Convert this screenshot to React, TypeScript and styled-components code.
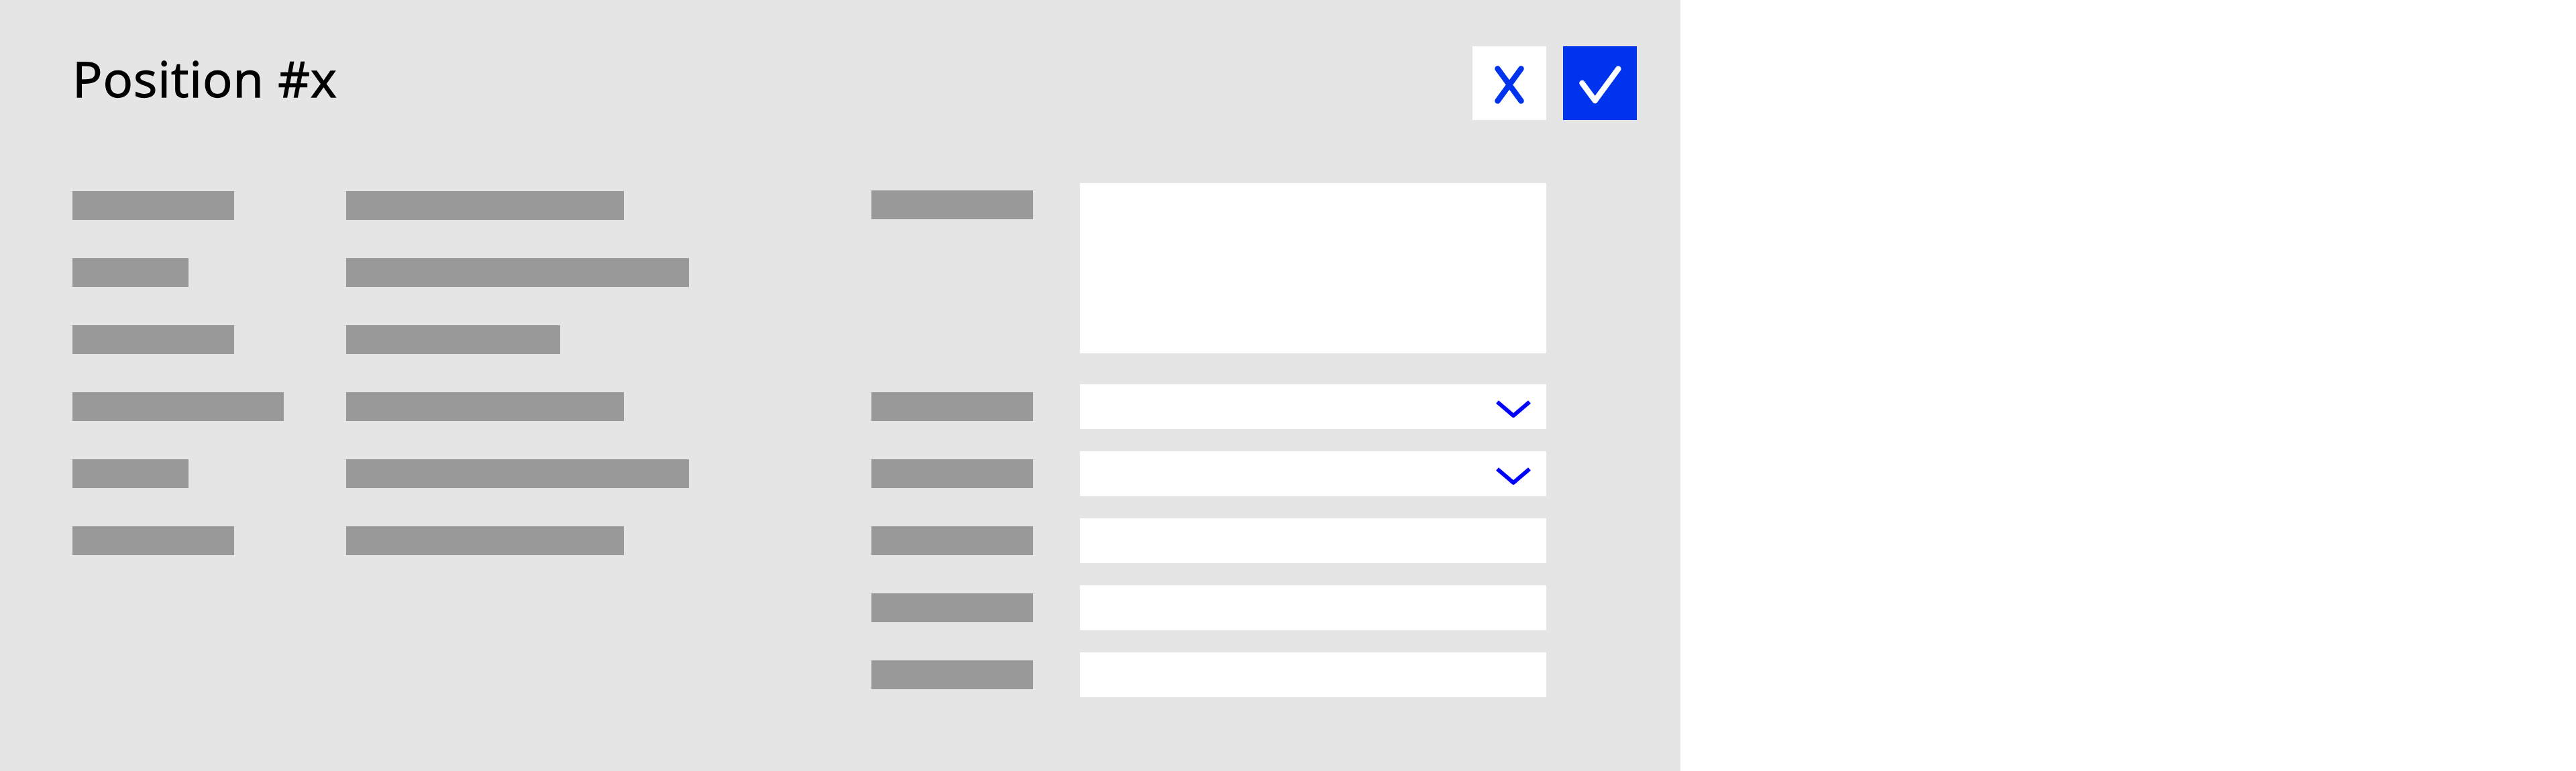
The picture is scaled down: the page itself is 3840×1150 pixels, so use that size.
import React from 'react';
import styled, {createGlobalStyle} from 'styled-components';

const GlobalStyle = createGlobalStyle`
  html, body {
    margin: 0;
    padding: 0;
    background: #ffffff;
  }
  body {
    font-family: 'Open Sans', 'Liberation Sans', sans-serif;
  }
`;

const Panel = styled.div`
  width: 2505px;
  height: 1150px;
  box-sizing: border-box;
  background: #e5e5e5;
  padding: 69px 65px 0 108px;
`;

const Header = styled.div`
  display: flex;
  justify-content: space-between;
  align-items: flex-start;
  height: 110px;
  margin-bottom: 94px;
`;

const Title = styled.h1`
  margin: 11px 0 0 0;
  padding: 0;
  font-family: 'Open Sans', 'Liberation Sans', sans-serif;
  font-weight: 400;
  font-size: 74px;
  line-height: 74px;
  letter-spacing: 1px;
  -webkit-text-stroke: 1.3px #000000;
  color: #000000;
`;

const Actions = styled.div`
  display: flex;
  gap: 25px;
`;

const ActionButton = styled.button<{$primary?: boolean}>`
  width: 110px;
  height: 110px;
  border: none;
  padding: 0;
  margin: 0;
  display: flex;
  align-items: center;
  justify-content: center;
  background: ${p => (p.$primary ? '#0033ee' : '#ffffff')};
  cursor: pointer;

  svg {
    display: block;
  }
`;

const Body = styled.div`
  display: grid;
  grid-template-columns: 1191px 1fr;
`;

const InfoList = styled.div`
  display: grid;
  grid-template-columns: 408px 1fr;
  grid-auto-rows: 67px;
  row-gap: 33px;
  align-items: center;
`;

const Bar = styled.div<{$w: number}>`
  width: ${p => p.$w}px;
  height: 43px;
  background: #999999;
`;

const Form = styled.div`
  display: grid;
  grid-template-columns: 241px 695px;
  column-gap: 70px;
  row-gap: 33px;
  align-items: center;
`;

const Label = styled(Bar)<{$top?: boolean}>`
  align-self: ${p => (p.$top ? 'start' : 'center')};
  margin-top: ${p => (p.$top ? '11px' : '0')};
`;

const TextArea = styled.div`
  height: 254px;
  margin-bottom: 13px;
  background: #ffffff;
`;

const Field = styled.div`
  height: 67px;
  background: #ffffff;
  display: flex;
  justify-content: flex-end;
  align-items: stretch;
  padding-right: 21px;

  svg {
    display: block;
  }
`;

const CloseIcon = () => (
  <svg width="110" height="110" viewBox="0 0 110 110">
    <path
      d="M37.5 33.5 L72.5 81.5 M72.5 33.5 L37.5 81.5"
      stroke="#0033ee"
      strokeWidth="8.5"
      strokeLinecap="round"
      fill="none"
    />
  </svg>
);

const CheckIcon = () => (
  <svg width="110" height="110" viewBox="0 0 110 110">
    <path
      d="M28.5 55 L47.7 81 L82.3 33.7"
      stroke="#ffffff"
      strokeWidth="8.5"
      strokeLinecap="round"
      strokeLinejoin="round"
      fill="none"
    />
  </svg>
);

const Chevron = () => (
  <svg width="60" height="67" viewBox="0 0 60 67">
    <path
      d="M8 26.5 L32 47 L56 26.5"
      stroke="#0000ff"
      strokeWidth="6"
      strokeLinejoin="round"
      fill="none"
    />
  </svg>
);

const infoRows: [number, number][] = [
  [241, 414],
  [173, 511],
  [241, 319],
  [315, 414],
  [173, 511],
  [241, 414],
];

const fields: ('select' | 'text')[] = ['select', 'select', 'text', 'text', 'text'];

export default function App(): JSX.Element {
  return (
    <>
      <GlobalStyle />
      <Panel>
        <Header>
          <Title>Position #x</Title>
          <Actions>
            <ActionButton aria-label="Cancel">
              <CloseIcon />
            </ActionButton>
            <ActionButton $primary aria-label="Confirm">
              <CheckIcon />
            </ActionButton>
          </Actions>
        </Header>
        <Body>
          <InfoList>
            {infoRows.map(([a, b], i) => (
              <React.Fragment key={i}>
                <Bar $w={a} />
                <Bar $w={b} />
              </React.Fragment>
            ))}
          </InfoList>
          <Form>
            <Label $w={241} $top />
            <TextArea />
            {fields.map((kind, i) => (
              <React.Fragment key={i}>
                <Label $w={241} />
                <Field>{kind === 'select' && <Chevron />}</Field>
              </React.Fragment>
            ))}
          </Form>
        </Body>
      </Panel>
    </>
  );
}
